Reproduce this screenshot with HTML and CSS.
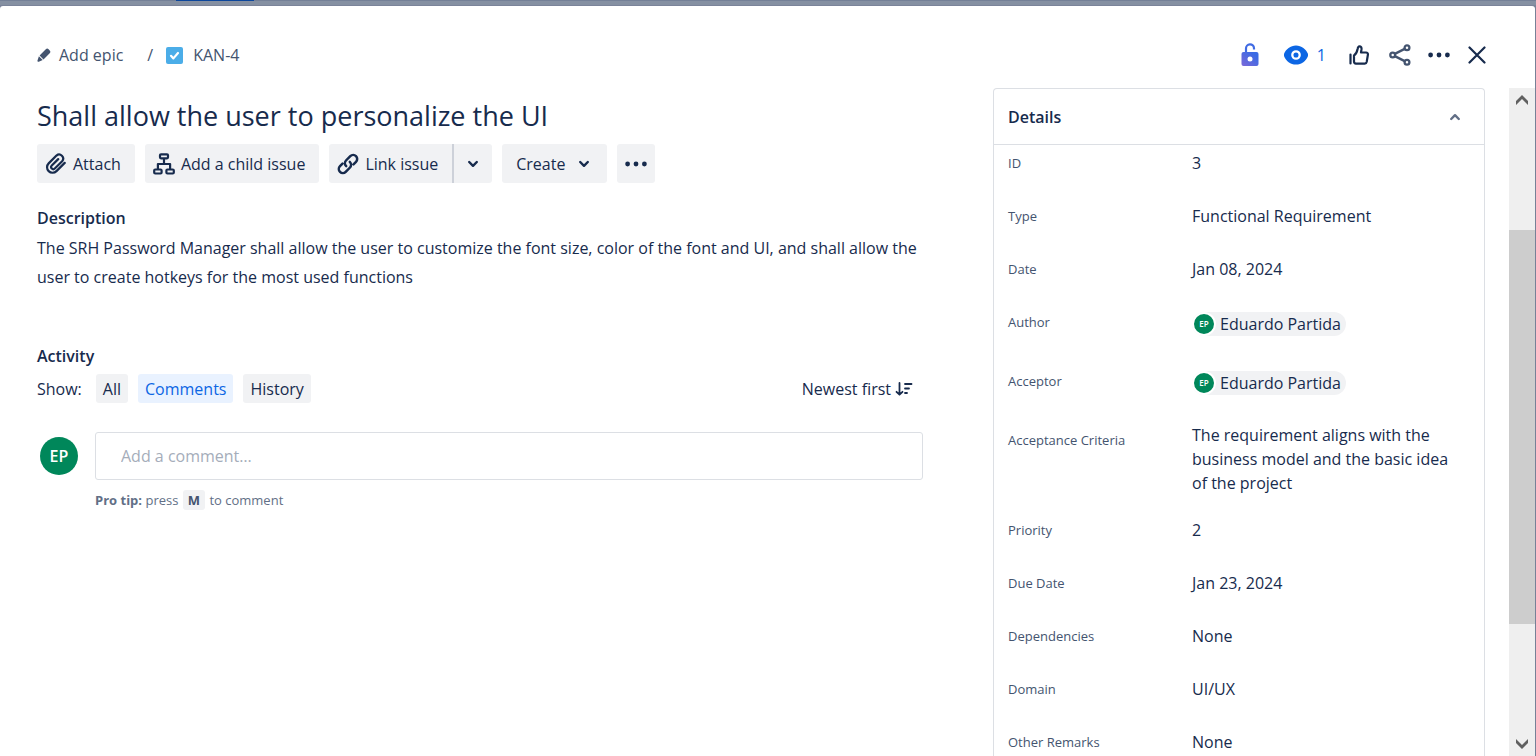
FILE: index.html
```html
<!DOCTYPE html>
<html lang="en">
<head>
<meta charset="utf-8">
<title>KAN-4 Shall allow the user to personalize the UI</title>
<link rel="stylesheet" href="styles.css">
</head>
<body>
<div class="backdrop"><span class="backdrop-tab"></span></div>
<div class="dialog" role="dialog" aria-labelledby="issue-title">
  <header class="topbar">
    <nav class="crumbs">
      <button class="plain crumb-edit">
        <svg width="14" height="14" viewBox="0 0 14 14" fill="currentColor"><path d="M8.800 1.300a2 2 0 0 1 2.800 0l1.100 1.100a2 2 0 0 1 0 2.800L6.500 11.400 2.600 7.500zM1.900 8.300l3.800 3.800-3.900 1.600c-.9.3-1.600-.4-1.300-1.300z"/></svg>
        Add epic
      </button>
      <span class="crumb-slash">/</span>
      <a class="crumb-key" href="#">
        <svg width="17" height="17" viewBox="0 0 17 17"><rect width="17" height="17" rx="2" fill="#4bade8"/><path d="M5 8.800l2.400 2.600 4.600-5.400" fill="none" stroke="#fff" stroke-width="2.200" stroke-linecap="round" stroke-linejoin="round"/></svg>
        KAN-4
      </a>
    </nav>
    <div class="actions">
      <button class="plain" aria-label="Restrict access">
        <svg width="20" height="24" viewBox="0 0 20 24"><defs><linearGradient id="lock" x1="1" y1="0" x2="0" y2="1"><stop offset="0.2" stop-color="#3a6be4"/><stop offset="1" stop-color="#7c68d8"/></linearGradient></defs><path d="M6 10V5.500a4 4 0 0 1 8-.3V6.500" fill="none" stroke="#3f6ae3" stroke-width="2.200"/><rect x="1.500" y="9" width="17" height="14" rx="2" fill="url(#lock)"/><circle cx="10" cy="16" r="2.500" fill="#fff"/></svg>
      </button>
      <button class="plain watch" aria-label="Watchers: 1">
        <svg width="24" height="20" viewBox="0 0 24 20"><path d="M12 .5C6.500.5 1.800 4.300.2 8.600a3.400 3.400 0 0 0 0 2.800C1.800 15.700 6.500 19.500 12 19.500s10.200-3.800 11.800-8.100a3.400 3.400 0 0 0 0-2.800C22.200 4.300 17.500.5 12 .5z" fill="#0c66e4"/><circle cx="12" cy="10" r="3.700" fill="none" stroke="#fff" stroke-width="2.300"/></svg>
        <span>1</span>
      </button>
      <button class="plain" aria-label="Vote">
        <svg width="20" height="20" viewBox="0 0 20 20" fill="none" stroke="currentColor" stroke-width="2.200" stroke-linejoin="round" stroke-linecap="round"><path d="M1.500 9.500v9M5 10.500c2.500-1.600 3-3.500 3.600-6.500.3-1.700.7-2.700 1.800-2.700 1.600 0 2.300 1.200 2.100 2.900L12 7.500h5c1.400 0 2.100 1 1.900 2.200l-1.200 7.200c-.2 1-.9 1.700-2 1.700H7c-1.200 0-2-.8-2-2z"/></svg>
      </button>
      <button class="plain share" aria-label="Share">
        <svg width="22" height="22" viewBox="0 0 22 22" fill="none" stroke="currentColor" stroke-width="2.300"><circle cx="3.700" cy="11" r="2.400"/><circle cx="18" cy="3.800" r="2.400"/><circle cx="18" cy="18.200" r="2.400"/><path d="M5.800 9.900l9.900-5M5.800 12.100l9.900 5"/></svg>
      </button>
      <button class="plain" aria-label="More actions">
        <svg width="22" height="6" viewBox="0 0 22 6" fill="currentColor"><circle cx="2.600" cy="3" r="2.400"/><circle cx="11" cy="3" r="2.400"/><circle cx="19.400" cy="3" r="2.400"/></svg>
      </button>
      <button class="plain" aria-label="Close">
        <svg width="18" height="18" viewBox="0 0 18 18" stroke="currentColor" stroke-width="2.200" stroke-linecap="round"><path d="M1.500 1.500l15 15M16.500 1.500l-15 15"/></svg>
      </button>
    </div>
  </header>

  <div class="content">
    <main class="issue">
      <h1 class="title" id="issue-title">Shall allow the user to personalize the UI</h1>
      <div class="toolbar">
        <button class="btn">
          <svg width="22" height="22" viewBox="0 0 24 24" fill="none" stroke="currentColor" stroke-width="2.400" stroke-linecap="round" stroke-linejoin="round"><path d="M21.500 10.800l-9 9a6 6 0 0 1-8.500-8.500l8.500-8.500a4.400 4.400 0 0 1 6.200 6.200l-8 8a2.300 2.300 0 0 1-3.300-3.300l7-7"/></svg>
          Attach
        </button>
        <button class="btn">
          <svg width="22" height="22" viewBox="0 0 22 22" fill="none" stroke="currentColor" stroke-width="2.200" stroke-linejoin="round"><rect x="7" y="1.300" width="8" height="4" rx="1"/><rect x="1.200" y="16.500" width="7.400" height="4" rx="1"/><rect x="13.400" y="16.500" width="7.400" height="4" rx="1"/><path d="M11 5.500v5.500M4.900 16.500V11h12.200v5.500"/></svg>
          Add a child issue
        </button>
        <div class="btn-group">
          <button class="btn">
            <svg width="22" height="22" viewBox="0 0 22 22" fill="none" stroke="currentColor" stroke-width="2.500" stroke-linecap="round"><path d="M9.200 13.100a4 4 0 0 1-.2-5.600l4.300-4.400a4 4 0 0 1 5.700 5.700l-2.500 2.500M12.800 8.900a4 4 0 0 1 .2 5.600l-4.300 4.400A4 4 0 0 1 3 13.200l2.500-2.500"/></svg>
            Link issue
          </button>
          <button class="btn btn-caret" aria-label="More link options">
            <svg width="12" height="8" viewBox="0 0 12 8" class="caret"><path d="M2.200 2l3.800 3.800L9.800 2"/></svg>
          </button>
        </div>
        <button class="btn btn-create">
          Create
          <svg width="12" height="8" viewBox="0 0 12 8" class="caret"><path d="M2.200 2l3.800 3.800L9.800 2"/></svg>
        </button>
        <button class="btn btn-more" aria-label="More">
          <svg width="22" height="6" viewBox="0 0 22 6" fill="currentColor"><circle cx="2.600" cy="3" r="2.400"/><circle cx="11" cy="3" r="2.400"/><circle cx="19.400" cy="3" r="2.400"/></svg>
        </button>
      </div>

      <section class="description">
        <h2 class="heading">Description</h2>
        <p class="body-text">The SRH Password Manager shall allow the user to customize the font size, color of the font and UI, and shall allow the user to create hotkeys for the most used functions</p>
      </section>

      <section>
        <h2 class="heading">Activity</h2>
        <div class="filters">
          <span class="filters-label">Show:</span>
          <button class="chip">All</button>
          <button class="chip chip-on">Comments</button>
          <button class="chip">History</button>
          <button class="plain sort">
            Newest first
            <svg width="18" height="14" viewBox="0 0 18 14" fill="none" stroke="currentColor" stroke-width="1.800" stroke-linecap="round" stroke-linejoin="round"><path d="M4.500 1v11.500M1.500 9.800l3 2.900 3-2.900M10 2h6.500M10 6.500h4M10 11h2"/></svg>
          </button>
        </div>
        <div class="composer">
          <span class="avatar">EP</span>
          <div class="composer-main">
            <input class="comment" type="text" placeholder="Add a comment…" aria-label="Add a comment">
            <p class="tip"><strong>Pro tip:</strong> press <kbd class="key">M</kbd> to comment</p>
          </div>
        </div>
      </section>
    </main>

    <aside class="details">
      <button class="details-head" aria-expanded="true">
        Details
        <svg width="12" height="8" viewBox="0 0 12 8" class="caret caret-soft"><path d="M2.200 6L6 2.200 9.800 6"/></svg>
      </button>
      <dl class="fields">
        <div class="field"><dt>ID</dt><dd>3</dd></div>
        <div class="field"><dt>Type</dt><dd>Functional Requirement</dd></div>
        <div class="field"><dt>Date</dt><dd>Jan 08, 2024</dd></div>
        <div class="field field-person"><dt>Author</dt><dd><span class="person"><span class="avatar avatar-small">EP</span>Eduardo Partida</span></dd></div>
        <div class="field field-person"><dt>Acceptor</dt><dd><span class="person"><span class="avatar avatar-small">EP</span>Eduardo Partida</span></dd></div>
        <div class="field field-long"><dt>Acceptance Criteria</dt><dd>The requirement aligns with the business model and the basic idea of the project</dd></div>
        <div class="field"><dt>Priority</dt><dd>2</dd></div>
        <div class="field"><dt>Due Date</dt><dd>Jan 23, 2024</dd></div>
        <div class="field"><dt>Dependencies</dt><dd>None</dd></div>
        <div class="field"><dt>Domain</dt><dd>UI/UX</dd></div>
        <div class="field"><dt>Other Remarks</dt><dd>None</dd></div>
      </dl>
    </aside>

    <div class="scrollbar">
      <button class="scroll-btn" aria-label="Scroll up"><svg width="12" height="10" viewBox="0 0 12 10" fill="#606060"><path d="M6 0l6 6v4L6 4 0 10V6z"/></svg></button>
      <div class="scroll-track"><div class="scroll-thumb"></div></div>
      <button class="scroll-btn" aria-label="Scroll down"><svg width="12" height="10" viewBox="0 0 12 10" fill="#606060"><path d="M6 10l6-6V0L6 6 0 0v4z"/></svg></button>
    </div>
  </div>
</div>
</body>
</html>
```

FILE: styles.css
```css
* {
  box-sizing: border-box;
}

body {
  margin: 0;
  height: 100vh;
  display: flex;
  flex-direction: column;
  overflow: hidden;
  background: #778197;
  color: #172b4d;
  font: 16px/24px "Segoe UI", "Open Sans", "Noto Sans", sans-serif;
}

svg {
  display: block;
  flex: none;
}

button {
  font: inherit;
  color: inherit;
  border: 0;
  cursor: pointer;
}

.plain {
  padding: 0;
  background: none;
  display: flex;
  align-items: center;
}

.caret {
  fill: none;
  stroke: currentColor;
  stroke-width: 2.4;
  stroke-linecap: round;
  stroke-linejoin: round;
}

.caret-soft {
  color: #626f86;
}

/* Page behind the dialog */

.backdrop {
  flex: none;
  height: 6px;
  padding-left: 176px;
  background: #8590a2;
  border-top: 1px solid #748097;
  border-bottom: 1px solid #7b849a;
}

.backdrop-tab {
  display: block;
  width: 78px;
  height: 1px;
  margin-top: -1px;
  background: #0b469c;
}

/* Dialog */

.dialog {
  flex: 1;
  min-height: 0;
  margin-right: 1px;
  display: flex;
  flex-direction: column;
  background: #fff;
  border-radius: 3px 3px 0 0;
}

.topbar {
  flex: none;
  height: 82px;
  padding: 0 49px 14px 37px;
  padding-top: 14px;
  display: flex;
  align-items: flex-start;
  justify-content: space-between;
}

.crumbs {
  height: 70px;
  display: flex;
  align-items: center;
  color: #44546f;
}

.crumb-edit {
  gap: 8px;
}

.crumb-slash {
  margin: 0 13px 0 24px;
}

.crumb-key {
  display: flex;
  align-items: center;
  gap: 10px;
  color: inherit;
  text-decoration: none;
}

.actions {
  height: 69px;
  display: flex;
  align-items: center;
  gap: 18px;
}

.watch {
  gap: 9px;
  margin: 0 5px 0 6px;
  color: #0c66e4;
}

.share {
  color: #44546f;
  margin: 0 -1px 0 2px;
}

.content {
  flex: 1;
  min-height: 0;
  padding-left: 37px;
  display: grid;
  grid-template-columns: minmax(0, 1fr) 492px 26px;
  column-gap: 24px;
}

/* Issue column */

.issue {
  padding-right: 46px;
}

.title {
  margin: 8px 0;
  font-size: 27px;
  font-weight: 400;
  line-height: 40px;
}

.toolbar {
  display: flex;
  gap: 10px;
}

.btn {
  height: 39px;
  padding: 0 14px 0 8px;
  display: flex;
  align-items: center;
  gap: 6px;
  background: #f1f2f4;
  border-radius: 3px;
}

.btn-more {
  padding: 0 8px;
}

.btn-group {
  display: flex;
}

.btn-group .btn:first-child {
  border-right: 2px solid #cdd1d9;
  border-radius: 3px 0 0 3px;
}

.btn-group .btn-caret {
  padding: 0 13px;
  border-radius: 0 3px 3px 0;
}

.btn-create {
  padding: 0 17px 0 14px;
  gap: 13px;
}

.description {
  margin: 23px 0 52px;
}

.heading {
  margin: 0;
  font-size: 16px;
  font-weight: 600;
  line-height: 24px;
}

.body-text {
  margin: 4px 0 0;
  line-height: 29px;
}

.filters {
  display: flex;
  align-items: center;
  gap: 10px;
  margin-top: 6px;
}

.filters-label {
  margin-right: 4px;
}

.chip {
  height: 29px;
  padding: 0 7px;
  background: #f1f2f4;
  border-radius: 3px;
}

.chip-on {
  background: #e9f2ff;
  color: #0c66e4;
}

.sort {
  gap: 4px;
  margin: 0 10px 0 auto;
}

.composer {
  display: flex;
  gap: 17px;
  margin-top: 29px;
  padding-left: 3px;
}

.avatar {
  flex: none;
  width: 38px;
  height: 38px;
  margin-top: 5px;
  border-radius: 50%;
  background: #00875a;
  color: #fff;
  font-size: 16px;
  font-weight: 600;
  line-height: 38px;
  text-align: center;
}

.composer-main {
  flex: 1;
}

.comment {
  display: block;
  width: 100%;
  height: 48px;
  padding: 0 25px;
  border: 1px solid #dcdfe4;
  border-radius: 3px;
  font: inherit;
  color: inherit;
}

.comment::placeholder {
  color: #a5adba;
}

.tip {
  margin: 10px 0 0;
  font-size: 13px;
  line-height: 20px;
  color: #626f86;
}

.key {
  display: inline-block;
  margin: 0 1px;
  padding: 0 5px;
  border-radius: 3px;
  background: #f1f2f4;
  color: #44546f;
  font: inherit;
  font-weight: 700;
}

/* Details panel */

.details {
  border: 1px solid #dcdfe4;
  border-bottom: 0;
  border-radius: 4px 4px 0 0;
  overflow: hidden;
}

.details-head {
  width: 100%;
  height: 56px;
  padding: 0 23px 0 14px;
  display: flex;
  align-items: center;
  justify-content: space-between;
  background: none;
  border-bottom: 1px solid #dcdfe4;
  font-weight: 600;
}

.fields {
  margin: 0;
  padding: 6px 32px 0 14px;
}

.field {
  display: grid;
  grid-template-columns: 184px minmax(0, 1fr);
  min-height: 53px;
}

.field dt {
  font-size: 13px;
  font-weight: 500;
  color: #44546f;
}

.field dd {
  margin: 0;
}

.field-person {
  min-height: 59px;
}

.field-person dd {
  display: flex;
  align-items: flex-start;
  padding-top: 2px;
}

.field-long {
  min-height: 90px;
}

.field-long dd {
  margin-top: -5px;
}

.person {
  display: flex;
  align-items: center;
  gap: 4px;
  height: 24px;
  padding-right: 5px;
  border-radius: 12px;
  background: #f1f2f4;
}

.avatar-small {
  width: 24px;
  height: 24px;
  margin: 0;
  border: 2px solid #fff;
  font-size: 8px;
  line-height: 20px;
}

/* Scrollbar */

.scrollbar {
  display: flex;
  flex-direction: column;
  background: #efefef;
}

.scroll-btn {
  flex: none;
  height: 24px;
  padding: 0;
  display: flex;
  align-items: center;
  justify-content: center;
  background: none;
}

.scroll-track {
  flex: 1;
  padding-top: 118px;
}

.scroll-thumb {
  height: 394px;
  background: #cdcdcd;
}
```
